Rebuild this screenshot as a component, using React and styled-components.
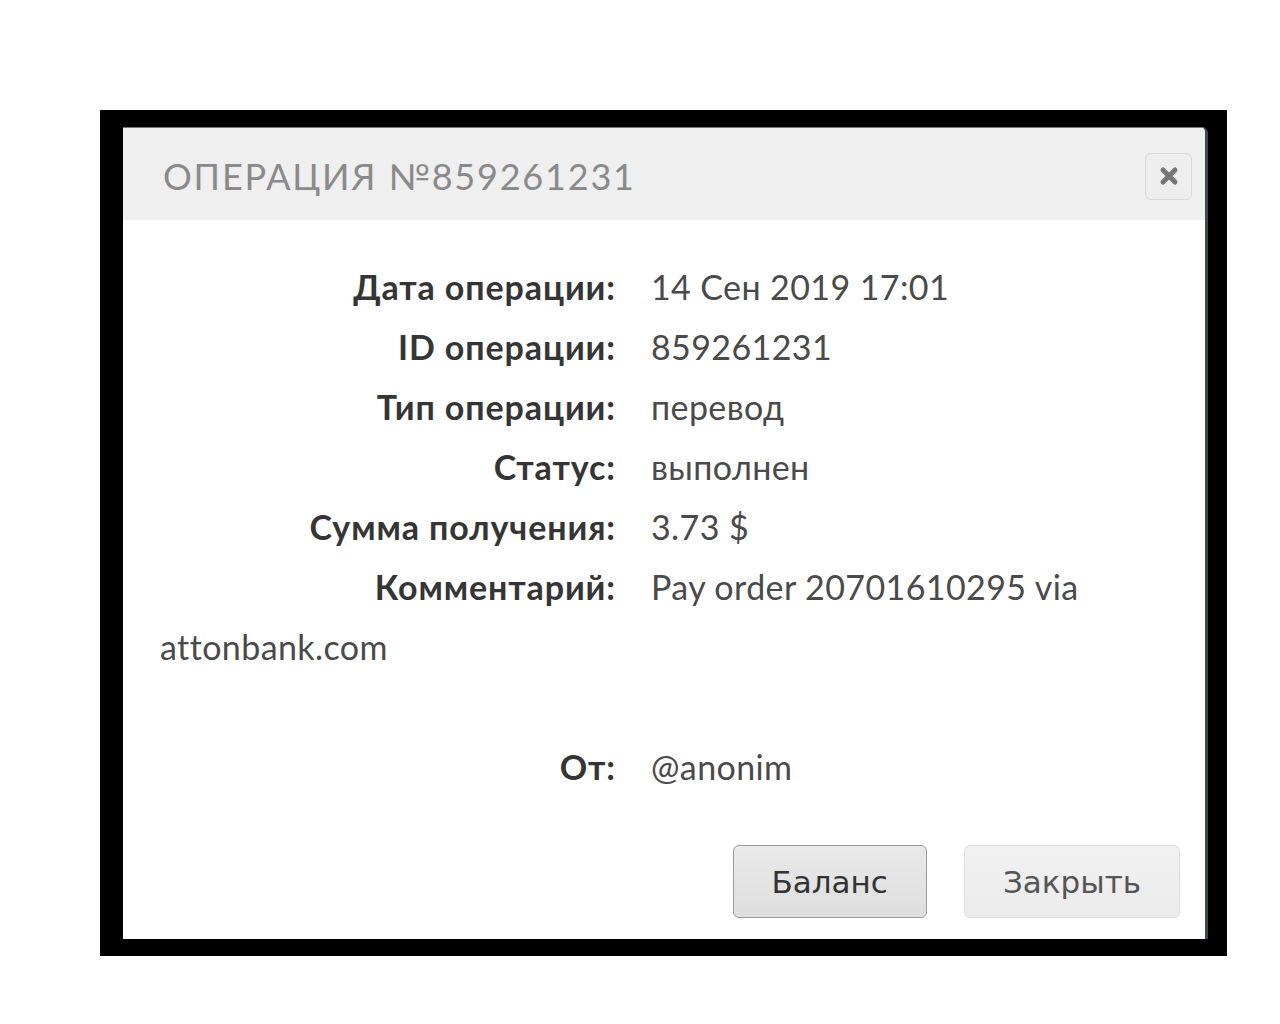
import styled, { createGlobalStyle } from "styled-components";

const GlobalStyle = createGlobalStyle`
  body {
    margin: 0;
    background: #ffffff;
    font-family: Lato, "Open Sans", sans-serif;
  }
`;

// black frame around the cropped dialog
const Frame = styled.div`
  width: 1127px;
  margin: 110px 0 0 100px;
  padding: 17px 19px 17px 23px;
  box-sizing: border-box;
  background: #000;
`;

const Modal = styled.div`
  background: #fff;
  border-top: 1px solid #6f787c;
  border-right: 3px solid #3b4950;
  border-radius: 0 6px 0 0;
  overflow: hidden;
`;

const Header = styled.div`
  height: 92px;
  display: flex;
  align-items: center;
  justify-content: space-between;
  padding: 0 13px 0 40px;
  background: #efefef;
`;

const Title = styled.h3`
  margin: 4px 0 0;
  font-family: Lato, "DejaVu Sans", sans-serif;
  font-weight: 400;
  font-size: 36px;
  letter-spacing: 1.8px;
  color: #8a8a8a;
  text-transform: uppercase;
`;

const CloseButton = styled.button`
  width: 47px;
  height: 47px;
  padding: 0;
  display: flex;
  align-items: center;
  justify-content: center;
  background: #eeeeee;
  border: 1px solid #dadada;
  border-radius: 6px;
  margin-top: 4px;
`;

const Body = styled.div`
  padding: 37px 37px 0 37px;
  font-size: 34px;
  letter-spacing: 0.4px;
  line-height: 60px;
  color: #444;
`;

const Row = styled.div`
  min-height: 60px;
`;

const Label = styled.span`
  display: inline-block;
  width: 456px;
  margin-right: 35px;
  text-align: right;
  font-weight: 700;
  letter-spacing: 0.9px;
  color: #353535;
`;

const Value = styled.span`
  color: #4a4a4a;
`;

const Footer = styled.div`
  display: flex;
  justify-content: flex-end;
  gap: 37px;
  padding: 48px 25px 21px;
`;

const Button = styled.button`
  height: 73px;
  padding: 0 38px;
  font-family: "DejaVu Sans", sans-serif;
  font-size: 31px;
  border-radius: 6px;
  color: ${(p) => (p.$primary ? "#333" : "#555")};
  border: 1px solid ${(p) => (p.$primary ? "#9a9a9a" : "#dcdcdc")};
  background: ${(p) =>
    p.$primary
      ? "linear-gradient(#e9e9e9, #dedede)"
      : "linear-gradient(#f1f1f1, #ebebeb)"};
`;

const rows = [
  ["Дата операции:", "14 Сен 2019 17:01"],
  ["ID операции:", "859261231"],
  ["Тип операции:", "перевод"],
  ["Статус:", "выполнен"],
  ["Сумма получения:", "3.73 $"],
  ["Комментарий:", "Pay order 20701610295 via attonbank.com"],
];

const App = () => {
  return (
    <>
      <GlobalStyle />
      <Frame>
        <Modal>
          <Header>
            <Title>Операция №859261231</Title>
            <CloseButton>
              <svg width="20" height="20" viewBox="0 0 20 20">
                <path
                  d="M4 4 L16 16 M16 4 L4 16"
                  stroke="#777"
                  strokeWidth="5"
                  strokeLinecap="round"
                />
              </svg>
            </CloseButton>
          </Header>
          <Body>
            {rows.map(([label, value]) => (
              <Row key={label}>
                <Label>{label}</Label>
                <Value>{value}</Value>
              </Row>
            ))}
            <Row />
            <Row>
              <Label>От:</Label>
              <Value>@anonim</Value>
            </Row>
          </Body>
          <Footer>
            <Button $primary>Баланс</Button>
            <Button>Закрыть</Button>
          </Footer>
        </Modal>
      </Frame>
    </>
  );
};

export default App;
